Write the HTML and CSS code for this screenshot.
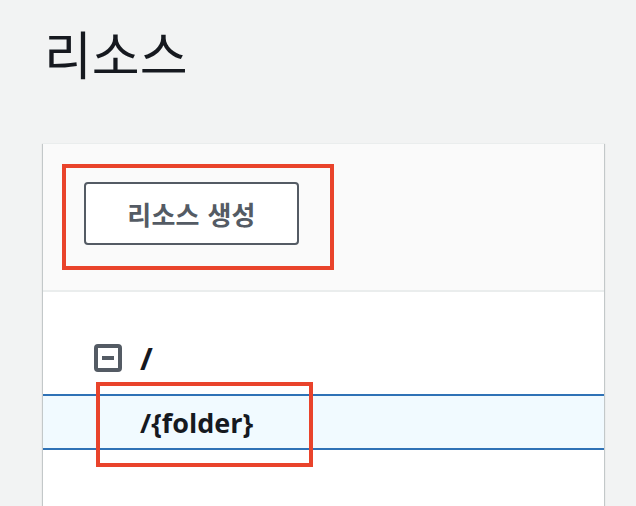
FILE: index.html
```html
<!DOCTYPE html>
<html lang="ko">
<head>
<meta charset="utf-8">
<title>리소스</title>
<link rel="stylesheet" href="styles.css">
</head>
<body>
  <h1 class="page-title">리소스</h1>
  <section class="panel">
    <div class="panel-header">
      <button class="btn" type="button">리소스 생성</button>
      <div class="mark mark-header"></div>
    </div>
    <div class="tree">
      <div class="tree-root">
        <span class="toggle"><span class="toggle-dash"></span></span>
        <span class="node-label root">/</span>
      </div>
      <div class="tree-row selected">
        <span class="node-label child">/{folder}</span>
        <div class="mark mark-row"></div>
      </div>
    </div>
  </section>
</body>
</html>
```

FILE: styles.css
```css
* { box-sizing: border-box; }

html, body {
  margin: 0;
  padding: 0;
  background: #f2f3f3;
  height: 100%;
  overflow: hidden;
}

body {
  font-family: "Noto Sans CJK KR", "Noto Sans", sans-serif;
  color: #16191f;
}

.page-title {
  margin: 0;
  padding: 20px 0 0 44px;
  height: 143px;
  font-size: 52px;
  line-height: 66px;
  font-weight: 400;
  color: #16191f;
}

.panel {
  position: relative;
  margin-left: 43px;
  width: 561px;
  height: 363px;
  background: #ffffff;
  border-top: 1px solid #eaeded;
  box-shadow: 0 1px 1px 0 rgba(0, 28, 36, 0.3),
              1px 1px 1px 0 rgba(0, 28, 36, 0.15),
              -1px 1px 1px 0 rgba(0, 28, 36, 0.15);
}

.panel-header {
  background: #fafafa;
  padding: 38px 0 45px 41px;
  border-bottom: 2px solid #eaeded;
}

.btn {
  display: block;
  width: 215px;
  height: 63px;
  padding: 0;
  background: #ffffff;
  border: 2px solid #545b64;
  border-radius: 4px;
  color: #545b64;
  font-family: "Noto Sans CJK KR", "Noto Sans", sans-serif;
  font-size: 26px;
  font-weight: 700;
  letter-spacing: 0.3px;
}

.mark {
  position: absolute;
  border: 4px solid #e9432b;
  pointer-events: none;
}

.mark-header {
  left: 19px;
  top: 20px;
  width: 272px;
  height: 106px;
}

.tree {
  padding-top: 40px;
}

.tree-root {
  display: flex;
  align-items: center;
  height: 62px;
  padding-left: 51px;
  padding-bottom: 10px;
}

.toggle {
  display: flex;
  align-items: center;
  justify-content: center;
  width: 28px;
  height: 28px;
  border: 4px solid #545b64;
  border-radius: 4px;
  margin-right: 18px;
}

.toggle-dash {
  width: 12px;
  height: 4px;
  background: #545b64;
}

.node-label {
  font-family: "Open Sans", "Noto Sans", sans-serif;
  font-size: 27px;
  font-weight: 700;
  color: #16191f;
  line-height: 1;
}

.node-label.root {
  font-size: 31px;
}

.tree-row {
  position: relative;
  display: flex;
  align-items: center;
  height: 56px;
  padding-left: 97px;
}

.tree-row.selected {
  background: #f1faff;
  border-top: 2px solid #2f72b6;
  border-bottom: 2px solid #2f72b6;
}

.mark-row {
  left: 53px;
  top: -14px;
  width: 217px;
  height: 85px;
}
```
